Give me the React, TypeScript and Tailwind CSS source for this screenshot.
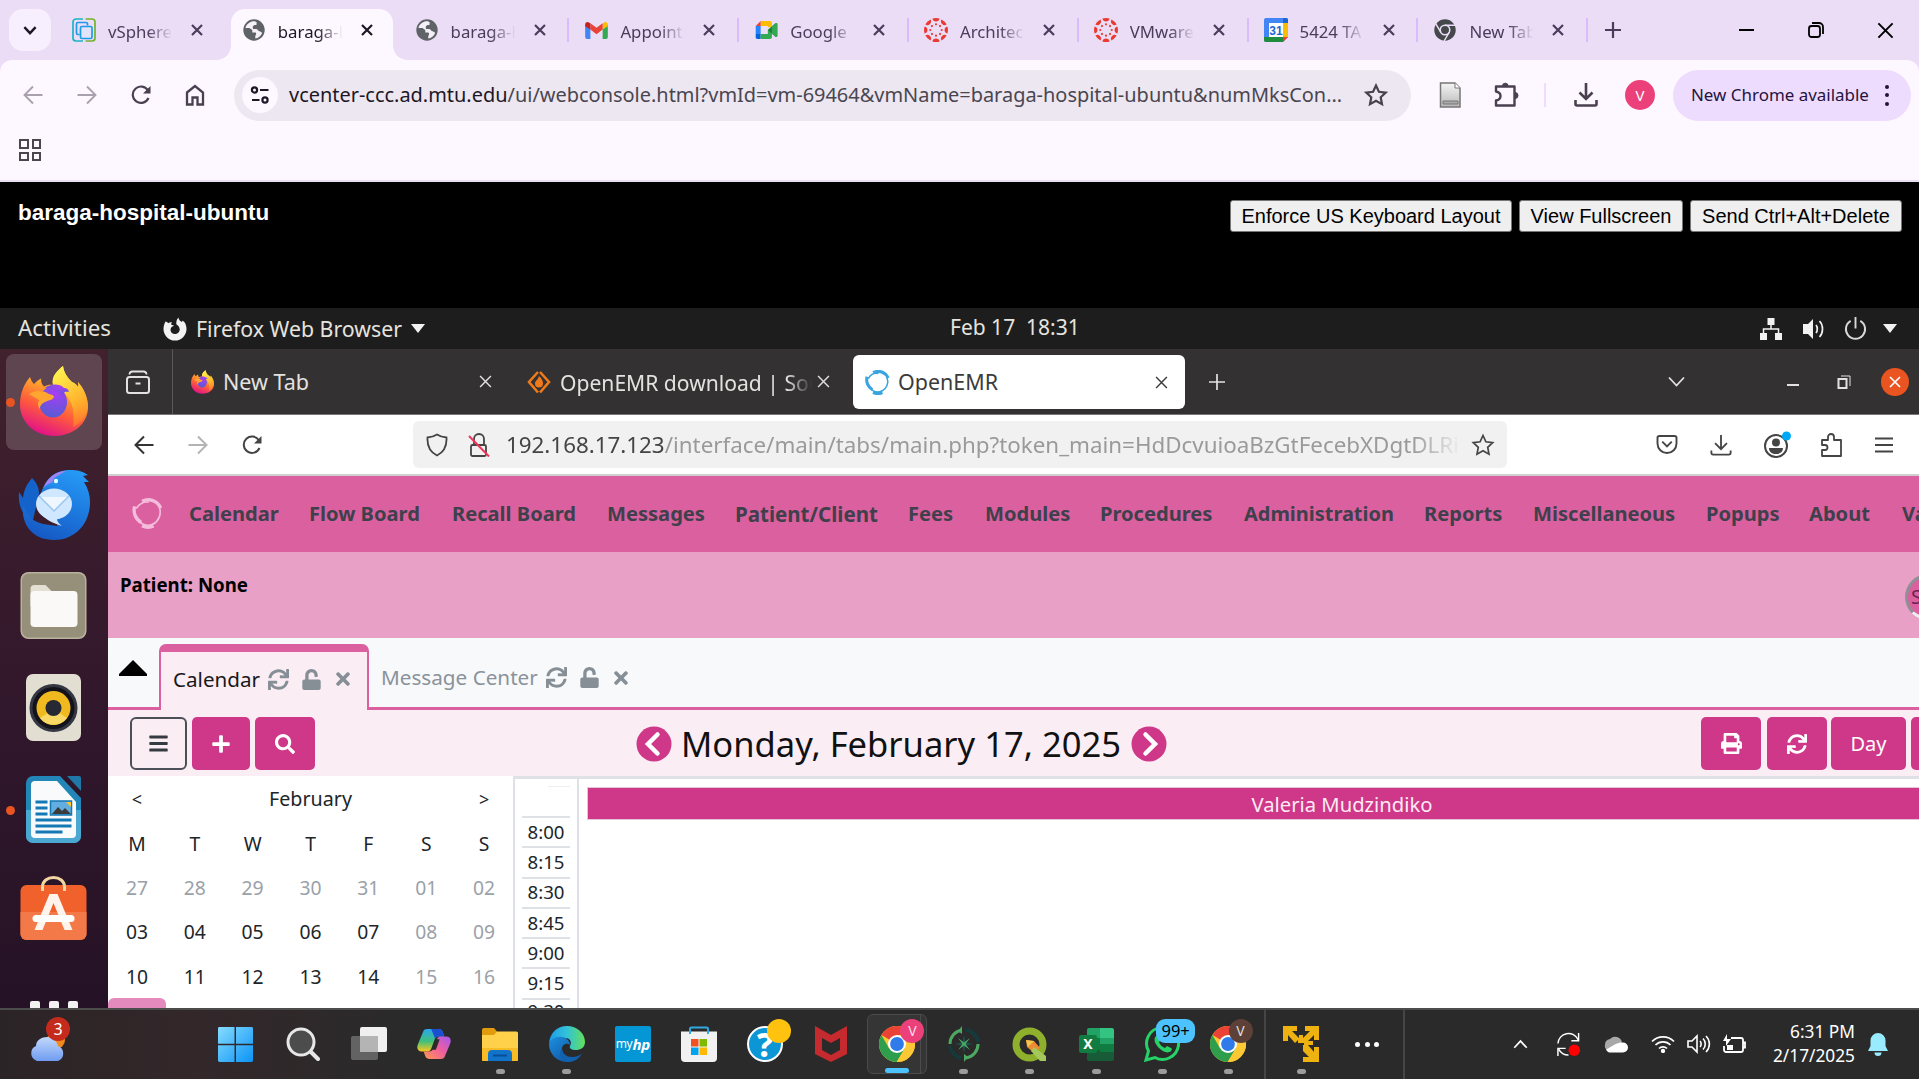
import React from "react";
import { FaSync, FaUnlock, FaTimes, FaBars, FaPlus, FaSearch, FaPrint } from "react-icons/fa";

type SvgProps = { className?: string };

/* ---------- favicons and browser icons ---------- */

const VSphere = () => (
  <svg viewBox="0 0 24 24" className="size-6" fill="none" strokeWidth="1.7">
    <path d="M11 1H4a3 3 0 0 0-3 3v16a3 3 0 0 0 3 3h7" stroke="#1cb5c4" />
    <path d="M13.500 1H20a3 3 0 0 1 3 3v16a3 3 0 0 1-3 3h-6.500" stroke="#76b12d" />
    <path d="M7.500 16.500H6A1.500 1.500 0 0 1 4.500 15V6A1.500 1.500 0 0 1 6 4.500h8A1.500 1.500 0 0 1 15.500 6v1.500" stroke="#1b9de8" />
    <rect x="8.500" y="8.500" width="11.500" height="12" rx="1.500" stroke="#1b9de8" fill="#e3e4fb" />
  </svg>
);

const Globe = () => (
  <svg viewBox="0 0 22 22" className="size-[22px]">
    <circle cx="11" cy="11" r="10.700" fill="#5f6368" />
    <path d="M9.500 2.200C6 3 3.200 5.500 2.400 9h4.100l2.800 2v2.600h2.600c1 0 1.400.8 1.200 1.600l-.8 1.700v2.600c3-.5 5.600-2.600 6.700-5.300l-.8-1.800-2.600-.5-1.600-2H10l-.3-2.300 1.700-1.500h2.300l.4-2.300-2.200-1.500z" fill="#fdf7ff" opacity=".95" />
    <path d="M14 2.800l-.6 2.600 1.800.9-1.500 1.800-2.500.6 1 1.400 3.200.2 1.700 2.200 2.500.4c.3-3.900-2-8.100-5.600-10.100z" fill="#5f6368" />
  </svg>
);

const Gmail = () => (
  <svg viewBox="0 0 24 18" className="h-[17px] w-[23px]">
    <path d="M0 3v13a2 2 0 0 0 2 2h3.500V7z" fill="#4285f4" />
    <path d="M18.500 18H22a2 2 0 0 0 2-2V3l-5.500 4z" fill="#34a853" />
    <path d="M18.500 2v6L24 4.500V2.600C24 .3 21.500-.8 19.700.7z" fill="#fbbc04" />
    <path d="M5.500 8V1.200L12 6l6.500-4.800V8L12 13z" fill="#ea4335" />
    <path d="M0 2.600v1.900L5.500 8V1.200L4.300.7C2.500-.8 0 .3 0 2.600z" fill="#c5221f" />
  </svg>
);

const Meet = () => (
  <svg viewBox="0 0 24 20" className="h-[18px] w-[23px]">
    <path d="M5.500 0H16a2 2 0 0 1 2 2v5h-4.500V5.500h-8z" fill="#fbbc04" />
    <path d="M0 5.500L5.500 0v5.500z" fill="#ea4335" />
    <path d="M0 5.500h5.500v9H0z" fill="#2684fc" />
    <path d="M0 14.500h5.500V20H2a2 2 0 0 1-2-2z" fill="#0066da" />
    <path d="M5.500 14.500h8V10L18 6.500V18a2 2 0 0 1-2 2H5.500z" fill="#34a853" />
    <path d="M13.500 10L22 2.600c.8-.6 2-.1 2 .9v13c0 1-1.200 1.500-2 .9z" fill="#188038" />
    <path d="M18 6v8l4 3.400c.8.6 2 .1 2-.9v-13c0-1-1.200-1.500-2-.9z" fill="#34a853" />
  </svg>
);

const Canvas = () => {
  const spokes = [0, 45, 90, 135, 180, 225, 270, 315];
  return (
    <svg viewBox="0 0 24 24" className="size-6" fill="#ea3a32">
      {spokes.map((a) => (
        <g key={a} transform={`rotate(${a} 12 12)`}>
          <path d="M8.400.6a12 12 0 0 1 7.200 0 3.700 3.700 0 0 1-7.200 0z" />
          <circle cx="12" cy="6.300" r="1.100" />
        </g>
      ))}
    </svg>
  );
};

const GCal = () => (
  <svg viewBox="0 0 24 24" className="size-6">
    <rect width="24" height="24" rx="2" fill="#4285f4" />
    <path d="M0 19h19v5H2a2 2 0 0 1-2-2z" fill="#1e8e3e" />
    <path d="M19 5h5v14h-5z" fill="#fbbc04" />
    <path d="M24 19v5h-5z" fill="#ebddf6" />
    <path d="M19 19h5l-5 5z" fill="#ea4335" />
    <path d="M19 0h3a2 2 0 0 1 2 2v3h-5z" fill="#1967d2" />
    <path d="M5 5h14v14H5z" fill="#fff" />
    <text x="12" y="16.500" textAnchor="middle" fontSize="12" fontWeight="700" fill="#1967d2" fontFamily="Liberation Sans">31</text>
  </svg>
);

const ChromeGray = () => (
  <svg viewBox="0 0 24 24" className="size-[22px]">
    <circle cx="12" cy="12" r="11.700" fill="#45484b" />
    <circle cx="12" cy="12" r="5.200" fill="#45484b" stroke="#ebddf6" strokeWidth="1.700" />
    <path d="M12 6.800h11M7.500 14.500L2 5.200M16.500 14.500L11 24" stroke="#ebddf6" strokeWidth="1.600" />
  </svg>
);

const Chrome = ({ className }: SvgProps) => (
  <svg viewBox="0 0 36 36" className={className}>
    <circle cx="18" cy="18" r="18" fill="#fcc934" />
    <path d="M18 18L2.400 9A18 18 0 0 1 33.600 9H18z" fill="#ea4335" />
    <path d="M2.400 9a18 18 0 0 0 15.300 27l8-13.500L18 18 10.200 22.500z" fill="#2e9e4c" />
    <path d="M18 9h15.600A18 18 0 0 1 17.700 36l8.100-13.500z" fill="#fcc934" />
    <circle cx="18" cy="18" r="9" fill="#fff" />
    <circle cx="18" cy="18" r="6.900" fill="#2f7bea" />
  </svg>
);

const X = ({ size = "size-[13px]", w = 2.200 }: { size?: string; w?: number }) => (
  <svg viewBox="0 0 12 12" className={size} fill="none" stroke="currentColor" strokeWidth={w}>
    <path d="M1 1l10 10M11 1L1 11" />
  </svg>
);

const Plus = ({ w = 2 }: { w?: number }) => (
  <svg viewBox="0 0 18 18" className="size-[18px]" fill="none" stroke="currentColor" strokeWidth={w}>
    <path d="M9 1v16M1 9h16" />
  </svg>
);

const Arrow = ({ flip, w = 2 }: { flip?: boolean; w?: number }) => (
  <svg viewBox="0 0 20 20" className={flip ? "size-5 -scale-x-100" : "size-5"} fill="none" stroke="currentColor" strokeWidth={w}>
    <path d="M19.500 10H2M10 1.500L1.500 10l8.500 8.500" />
  </svg>
);

const Reload = ({ w = 2.200 }: { w?: number }) => (
  <svg viewBox="0 0 20 20" className="size-5" fill="none" stroke="currentColor" strokeWidth={w}>
    <path d="M17.500 13A8.200 8.200 0 1 1 17 5.500L18 7" />
    <path d="M19.500 1v7.500H12z" fill="currentColor" stroke="none" />
  </svg>
);

const Star = ({ w = 2 }: { w?: number }) => (
  <svg viewBox="0 0 24 24" className="size-6" fill="none" stroke="currentColor" strokeWidth={w}>
    <path d="M12 2.500l2.900 6.300 6.800.8-5 4.700 1.300 6.900-6-3.400-6 3.400 1.300-6.900-5-4.700 6.800-.8z" />
  </svg>
);

const Download = ({ w = 2.600 }: { w?: number }) => (
  <svg viewBox="0 0 24 24" className="size-6" fill="none" stroke="currentColor" strokeWidth={w}>
    <path d="M12 0v15M5.500 9.500L12 16l6.500-6.500M1.500 17v4a1.500 1.500 0 0 0 1.500 1.500h18a1.500 1.500 0 0 0 1.500-1.500v-4" />
  </svg>
);

const FoxMono = () => (
  <svg viewBox="0 0 24 24" className="size-6" fill="#f2f2f2">
    <path fillRule="evenodd" d="M2.500 4.500c1 0 2 .8 2.600 1.800C6.500 5.200 8 5 9 5.200 8.300 6 8 7 8.500 8c1 0 2 .3 2.500 1-1.500.2-3.500 1.500-3.500 3.700 0 2.700 2 4.300 4.500 4.300s4.700-2 4.700-4.600c0-2.300-1.600-4-3.200-4.900 0 0-1-4 2-7 .2 2.200 1.500 3.500 3.500 4.500.5-1 .3-1.500.3-1.500C22.500 5 23.500 9 23.500 12A11.500 11.500 0 0 1 .5 12c0-3.500 1-5.500 2-7.500z" />
  </svg>
);

const Firefox = ({ className, id }: { className?: string; id: string }) => (
  <svg viewBox="0 0 68 70" className={className}>
    <defs>
      <linearGradient id={id + "b"} x1=".75" y1="0" x2=".35" y2="1">
        <stop offset="0" stopColor="#ffe93f" />
        <stop offset=".35" stopColor="#ffa62b" />
        <stop offset=".65" stopColor="#ff5b3c" />
        <stop offset="1" stopColor="#e0108a" />
      </linearGradient>
      <linearGradient id={id + "y"} x1=".4" y1="0" x2=".8" y2="1">
        <stop offset="0" stopColor="#fff04e" />
        <stop offset=".6" stopColor="#ffb22c" />
        <stop offset="1" stopColor="#ff8a24" stopOpacity=".4" />
      </linearGradient>
      <radialGradient id={id + "p"} cx=".6" cy=".2" r=".9">
        <stop offset="0" stopColor="#a83df5" />
        <stop offset="1" stopColor="#4f5fd0" />
      </radialGradient>
    </defs>
    <path d="M10 11c1 3 2 5 4 7 2-2 4-4 7-5.500 0 4 1 6 3 8 4-2 6-2 9-1.500C31 10 38 4 43 0c1 7 4 11 9 16 3 1 5 3 6 5 1-2 0-4 0-5 6 7 10 16 10 25 0 17-15 29-34 29S0 56 0 39C0 27 4 18 10 11z" fill={`url(#${id}b)`} />
    <path d="M43 0c1 7 4 11 9 16 3 1 5 3 6 5 1-2 0-4 0-5 6 7 10 16 10 25-2 11-8 17-15 20 2-14 0-26-9-34-5-3-8-6-11-8C31 10 38 4 43 0z" fill={`url(#${id}y)`} />
    <ellipse cx="33" cy="36" rx="14" ry="15.500" fill={`url(#${id}p)`} />
    <path d="M25 22c5-4 14-5 19 0 3 0 4 1 5 4-5-1-6 1-5 4-5-5-12-8-19-8z" fill={`url(#${id}p)`} />
    <path d="M9 28c6-4 15-4 20 0 3 1 5 1 5 3-2 4-6 3-9 5-4 2-5 4-5 7-3-4-2-7-1-9-3-2-7-4-10-6z" fill="#ffa630" />
  </svg>
);

const OpenEmr = ({ className, color, width = 3 }: { className: string; color: string; width?: number }) => (
  <svg viewBox="0 0 26 26" className={className} fill="none" stroke={color} strokeWidth={width}>
    <path d="M8.500 2.800A11 11 0 0 1 24 8.500" />
    <path d="M23 8a11.500 11.500 0 0 1-5.500 14" strokeWidth={width / 2} />
    <path d="M8.500 23a11 11 0 0 0 9.500.3" strokeWidth={width * 1.200} />
    <path d="M2.200 7a12 12 0 0 0 5.500 13.500" />
    <path d="M3.500 9A10 10 0 0 1 14 3.500M7 20.500a9 9 0 0 0 11 1" strokeWidth={width / 2} />
  </svg>
);

const Vee = ({ className, w = 2 }: { className: string; w?: number }) => (
  <svg viewBox="0 0 18 12" className={className} fill="none" stroke="currentColor" strokeWidth={w}>
    <path d="M1.500 1.500L9 9.500l7.500-8" />
  </svg>
);

/* ---------- Chrome window ---------- */

const tabs = [
  { icon: <VSphere />, text: "vSphere -", active: false },
  { icon: <Globe />, text: "baraga-h", active: true },
  { icon: <Globe />, text: "baraga-h", active: false },
  { icon: <Gmail />, text: "Appointm", active: false },
  { icon: <Meet />, text: "Google", active: false },
  { icon: <Canvas />, text: "Architect", active: false },
  { icon: <Canvas />, text: "VMware", active: false },
  { icon: <GCal />, text: "5424 TA", active: false },
  { icon: <ChromeGray />, text: "New Tab", active: false },
];

function ChromeTabs() {
  return (
    <div className="flex h-[60px] items-center bg-[#ebddf6] text-[#4a3d5c]">
      <div className="ml-[9px] flex size-[42px] shrink-0 items-center justify-center rounded-[14px] bg-[#f8effe] text-[#1d1726]">
        <Vee className="h-[9px] w-[14px]" w={3.200} />
      </div>
      <div className="ml-[6px] flex h-full">
        {tabs.map((t, i) => (
          <div key={i} className={"relative flex h-full w-[169.800px] shrink-0 items-center " + (i === 2 ? "ml-[3px]" : "")}>
            {t.active && (
              <>
                <div className="absolute inset-x-[4px] top-[9px] bottom-0 rounded-t-[14px] bg-[#fdf7ff]" />
                <div className="absolute bottom-0 -left-[10px] size-[14px] bg-[radial-gradient(circle_at_0_0,transparent_13.500px,#fdf7ff_14px)]" />
                <div className="absolute -right-[10px] bottom-0 size-[14px] bg-[radial-gradient(circle_at_100%_0,transparent_13.500px,#fdf7ff_14px)]" />
              </>
            )}
            <div className="relative ml-[15px] flex w-6 justify-center">{t.icon}</div>
            <div
              className={
                "relative mt-px ml-[12px] h-[24px] w-[66px] overflow-hidden text-[16.800px] leading-[26px] whitespace-nowrap [mask-image:linear-gradient(to_right,#000_60%,transparent_98%)] " +
                (t.active ? "text-[#1d1726]" : "")
              }
            >
              {t.text}
            </div>
            <div className={"relative ml-[17px] flex " + (t.active ? "text-[#1d1726]" : "")}>
              <X size="size-[12px]" />
            </div>
            {i > 1 && <div className="absolute top-[18px] right-0 h-6 w-[2px] bg-[#d9bcfb]" />}
          </div>
        ))}
      </div>
      <div className="ml-[16px]">
        <Plus w={2.200} />
      </div>
      <div className="ml-auto flex items-center text-black">
        <div className="mr-[54px] h-[2px] w-[15px] bg-black" />
        <svg viewBox="0 0 16 16" className="mr-[53px] size-4" fill="none" stroke="currentColor" strokeWidth="1.800">
          <rect x="1" y="4" width="11" height="11" rx="2.500" />
          <path d="M4 1h7a4 4 0 0 1 4 4v7" />
        </svg>
        <div className="mr-[25px]">
          <X size="size-[17px]" w={1.400} />
        </div>
      </div>
    </div>
  );
}

function ChromeToolbar() {
  return (
    <div className="bg-[#ebddf6]">
      <div className="flex h-[122px] flex-col rounded-t-[12px] border-b-2 border-[#e9dff0] bg-[#fdf7ff] text-[#4a4050]">
        <div className="mt-px flex h-[68px] items-center">
          <div className="ml-[23px] text-[#a9a2ae]"><Arrow w={1.900} /></div>
          <div className="ml-[34px] text-[#a9a2ae]"><Arrow flip w={1.900} /></div>
          <div className="ml-[34px]"><Reload /></div>
          <svg viewBox="0 0 20 22" className="ml-[34px] h-[22px] w-5" fill="none" stroke="currentColor" strokeWidth="2.300">
            <path d="M2 8.500L10 2l8 6.500V20.500h-5.500v-7h-5v7H2z" />
          </svg>
          <div className="ml-[29px] flex h-[51px] w-[1177px] items-center rounded-full bg-[#ede7f1]">
            <div className="ml-[8px] flex size-9 items-center justify-center rounded-full bg-[#fdf7ff] text-[#1d1726]">
              <svg viewBox="0 0 20 18" className="h-[18px] w-5" fill="none" stroke="currentColor" strokeWidth="2.200">
                <circle cx="4.500" cy="4" r="2.600" />
                <path d="M10 4h8.500M2 14h7.500" />
                <circle cx="15" cy="14" r="2.600" />
              </svg>
            </div>
            <div className="ml-[11px] text-[19.950px] whitespace-nowrap text-[#4a4650]">
              <span className="text-[#1d1726]">vcenter-ccc.ad.mtu.edu</span>
              /ui/webconsole.html?vmId=vm-69464&amp;vmName=baraga-hospital-ubuntu&amp;numMksCon...
            </div>
            <div className="mr-[23px] ml-auto text-[#47424c]"><Star w={2.200} /></div>
          </div>
          <svg viewBox="0 0 22 26" className="ml-[28px] h-[26px] w-[22px]">
            <defs>
              <linearGradient id="doc" x1="0" y1="0" x2="0" y2="1">
                <stop offset="0" stopColor="#f4f4f4" />
                <stop offset="1" stopColor="#b9b9b9" />
              </linearGradient>
            </defs>
            <path d="M1.500 1h14.500l5 5v19h-19.500z" fill="url(#doc)" stroke="#777" strokeWidth="1.500" />
            <path d="M4 19h15v3H4z" fill="#aaa" stroke="#777" />
            <path d="M16 1v5h5" fill="#fff" stroke="#777" />
          </svg>
          <svg viewBox="0 0 26 26" className="ml-[32px] size-[26px]" fill="none" stroke="currentColor" strokeWidth="2.400">
            <path d="M3 4.500h18.500v19H3v-5c3.500-.5 4.500-2 4.500-4.500S6 10 3 9.500z" strokeLinejoin="round" />
            <path d="M9.500 4a2.800 2.800 0 0 1 5.600 0zM22 10.500a3 3 0 0 1 0 6z" fill="currentColor" strokeWidth="1" />
          </svg>
          <div className="ml-[25px] h-6 w-[2px] bg-[#ecdcfd]" />
          <div className="ml-[28px]"><Download /></div>
          <div className="ml-[27px] flex size-[30px] items-center justify-center rounded-full bg-[#ec407a] text-[15px] text-white">V</div>
          <div className="ml-[18px] flex h-[51px] w-[238px] items-center rounded-full bg-[#eedcfe] text-[#25123f]">
            <span className="ml-[18px] text-[16.950px] whitespace-nowrap">New Chrome available</span>
            <span className="ml-[16px] flex flex-col gap-[4.500px]">
              <i className="size-[4px] rounded-full bg-[#25123f]" />
              <i className="size-[4px] rounded-full bg-[#25123f]" />
              <i className="size-[4px] rounded-full bg-[#25123f]" />
            </span>
          </div>
        </div>
        <div className="mt-[10px] ml-[19px] grid h-[22px] w-[22px] grid-cols-2 gap-[3px]">
          <i className="border-2 border-[#4a4650]" />
          <i className="border-2 border-[#4a4650]" />
          <i className="border-2 border-[#4a4650]" />
          <i className="border-2 border-[#4a4650]" />
        </div>
      </div>
    </div>
  );
}

function ConsoleHeader() {
  const btn = "flex h-[32px] items-center justify-center rounded-[3px] border border-[#767676] bg-[#efefef] text-[20px] whitespace-nowrap text-black";
  return (
    <div className="flex h-[126px] items-start bg-black font-['Liberation_Sans',sans-serif]">
      <h1 className="mt-[15px] ml-[18px] text-[22.500px] leading-[32px] font-bold whitespace-nowrap text-white">baraga-hospital-ubuntu</h1>
      <div className="mt-[18px] mr-[17px] ml-auto flex gap-[7px]">
        <button className={btn + " w-[282px]"}>Enforce US Keyboard Layout</button>
        <button className={btn + " w-[164px]"}>View Fullscreen</button>
        <button className={btn + " w-[212px]"}>Send Ctrl+Alt+Delete</button>
      </div>
    </div>
  );
}

/* ---------- Ubuntu desktop ---------- */

const TriDown = ({ className }: SvgProps) => (
  <svg viewBox="0 0 14 9" className={className} fill="#f2f2f2"><path d="M0 0h14L7 9z" /></svg>
);

function UbuntuBar() {
  return (
    <div className="grid h-[41px] shrink-0 grid-cols-[950px_1fr_160px] items-center bg-[#1d1d1d] text-[#e6e3df]">
      <div className="flex items-center">
        <span className="ml-[18px] w-[145px] text-[22.320px] leading-none">Activities</span>
        <FoxMono />
        <span className="ml-[9px] w-[206px] text-[21.300px] leading-none whitespace-nowrap">Firefox Web Browser</span>
        <TriDown className="ml-[9px] h-[9px] w-[14px]" />
      </div>
      <span className="-mt-[2px] text-[21px] leading-none whitespace-pre">Feb 17  18:31</span>
      <div className="flex items-center">
        <svg viewBox="0 0 24 24" className="size-6" fill="#f2f2f2">
          <path d="M8.500 1h7v7h-7zM1 16h7v7H1zM16 16h7v7h-7z" />
          <path d="M12 7v5M4.500 17v-5h15v5" fill="none" stroke="#f2f2f2" strokeWidth="1.500" />
        </svg>
        <svg viewBox="0 0 24 24" className="ml-[19px] size-6" fill="none" stroke="#f2f2f2" strokeWidth="1.700">
          <path d="M1 7h5l5-5v20l-5-5H1z" fill="#f2f2f2" stroke="none" />
          <path d="M14 8c1.700 2 1.700 6 0 8M17.500 4c4 4 4 12 0 16" />
        </svg>
        <svg viewBox="0 0 24 24" className="ml-[18px] size-[23px]" fill="none" stroke="#d8d8d8" strokeWidth="2">
          <path d="M7 4a10 10 0 1 0 10 0M12 0v12" />
        </svg>
        <TriDown className="ml-[16px] h-[9px] w-[14px]" />
      </div>
    </div>
  );
}

function Dock() {
  return (
    <div className="flex w-[108px] shrink-0 flex-col items-center overflow-hidden bg-linear-to-b from-[#41212c] via-[#33182c] to-[#251226] pr-px">
      <div className="relative mt-[5px] flex h-[96px] w-[96px] shrink-0 items-center justify-center rounded-[8px] bg-[#5f4550]">
        <Firefox className="-mt-[3px] h-[70px] w-[68px]" id="dock" />
        <i className="absolute top-[44px] left-0 size-[9px] rounded-full bg-[#e95420]" />
      </div>
      <svg viewBox="0 0 72 70" className="mt-[20px] h-[70px] w-[72px] shrink-0">
        <defs>
          <linearGradient id="tb" x1=".7" y1="0" x2=".3" y2="1">
            <stop offset="0" stopColor="#2598f5" />
            <stop offset="1" stopColor="#1558c4" />
          </linearGradient>
        </defs>
        <path d="M14 8c6 6 7 11 7 16l-6 26C3 45 0 34 1 22c2 3 3 4 4 6 1-9 4-14 9-20z" fill="#1463cb" />
        <path d="M24 22C28 6 40 0 52 0c8 0 12 1 18 5l-5 1 6 6h-5c4 6 6 13 6 20 0 22-15 38-36 38S3 55 5 36c6 10 8 15 20 18l14 2V34z" fill="url(#tb)" />
        <path d="M24 22C28 8 38 1 48 1l-12 7-4 10-7 3z" fill="#a184f4" />
        <path d="M24 20c4-6 10-8 14-8l10 10-12 12-16-4z" fill="url(#tb)" />
        <ellipse cx="36" cy="34" rx="18" ry="15.500" fill="#cfe7ff" />
        <path d="M22 43c5 6 12 10 22 13-5-4-6-7-4-9z" fill="#cfe7ff" />
        <path d="M22 27l14 14 14-14z" fill="#eef7ff" />
        <path d="M21 26l15 15 15-15" fill="none" stroke="#9cc6ee" strokeWidth="1.500" />
        <circle cx="38" cy="11" r="2.200" fill="#dff" />
      </svg>
      <svg viewBox="0 0 66 67" className="mt-[32px] h-[67px] w-[67px] shrink-0">
        <rect width="66" height="67" rx="8" fill="#b9b29d" />
        <rect x="1.500" y="1.500" width="63" height="64" rx="7" fill="#968f79" />
        <path d="M10 17a4 4 0 0 1 4-4h11l6 6h22v15H10z" fill="#e3dfd3" />
        <rect x="10" y="19" width="47" height="36" rx="4" fill="#faf9f7" />
      </svg>
      <svg viewBox="0 0 55 67" className="mt-[35px] h-[67px] w-[55px] shrink-0">
        <rect width="55" height="67" rx="7" fill="#e3ded2" />
        <circle cx="27.500" cy="34" r="24" fill="#343641" />
        <circle cx="27.500" cy="34" r="21" fill="#12131b" />
        <circle cx="27.500" cy="34" r="17" fill="#efb91f" />
        <path d="M14 44a17 17 0 0 0 27 0l-9-6h-9z" fill="#f9d866" />
        <circle cx="27.500" cy="34" r="8" fill="#262833" />
      </svg>
      <div className="relative mt-[35px] flex w-[96px] shrink-0 justify-center">
        <i className="absolute top-[30px] left-0 size-[9px] rounded-full bg-[#e95420]" />
        <svg viewBox="0 0 55 67" className="h-[67px] w-[55px]">
          <path d="M7 0h27l21 22v38a7 7 0 0 1-7 7H7a7 7 0 0 1-7-7V7a7 7 0 0 1 7-7z" fill="#2386b8" />
          <path d="M0 34h55v26a7 7 0 0 1-7 7H7a7 7 0 0 1-7-7z" fill="#4ba8d1" />
          <path d="M41 0h12a2 2 0 0 1 2 2v13z" fill="#1f78a8" />
          <path d="M9 5h22l19 21v32a4 4 0 0 1-4 4H9a4 4 0 0 1-4-4V9a4 4 0 0 1 4-4z" fill="#f8fafb" />
          <path d="M9.500 26h12M9.500 32h12M9.500 38h12M9.500 44h36M9.500 50h36M9.500 56h27" stroke="#1378b4" strokeWidth="3" />
          <rect x="24.500" y="25" width="21" height="14" fill="#62aee0" stroke="#1378b4" strokeWidth="1.500" />
          <path d="M26 38l6-7 4 4 3-3 6 6z" fill="#3b3b3b" />
          <path d="M40 26h5v5z" fill="#ffc628" />
        </svg>
      </div>
      <svg viewBox="0 0 66 64" className="mt-[33px] h-[64px] w-[67px] shrink-0">
        <rect y="9" width="66" height="55" rx="6" fill="#f0612b" />
        <path d="M0 36h66v22a6 6 0 0 1-6 6H6a6 6 0 0 1-6-6z" fill="#f37a48" />
        <path d="M22 15V11C22 5 27 1.500 33 1.500S44 5 44 11v4" fill="none" stroke="#f3d6a0" strokeWidth="3" />
        <path d="M29 18h8l15 36h-8L33 27 22 54h-8z" fill="#fff3ec" />
        <rect x="12" y="39" width="42" height="7" rx="3.500" fill="#fff" />
      </svg>
      <div className="mt-[61px] flex shrink-0 gap-[9px]">
        <i className="size-[10px] rounded-[2px] bg-[#f2f2f2]" />
        <i className="size-[10px] rounded-[2px] bg-[#f2f2f2]" />
        <i className="size-[10px] rounded-[2px] bg-[#f2f2f2]" />
      </div>
    </div>
  );
}

function FirefoxTabs() {
  return (
    <div className="flex h-[66px] shrink-0 items-center border-b border-[#777] bg-[#333132] text-[#e4e2e0]">
      <div className="flex h-full w-[65px] items-center justify-center border-r border-[#5a5859] pr-[4px]">
        <svg viewBox="0 0 24 24" className="size-6" fill="none" stroke="currentColor" strokeWidth="2">
          <rect x="1" y="7" width="22" height="16" rx="2.500" />
          <path d="M3.500 4.500a3 3 0 0 1 2.500-3h12a3 3 0 0 1 2.500 3M9.500 13.500h5" strokeWidth="1.800" />
        </svg>
      </div>
      <Firefox className="ml-[18px] h-6 w-[23px]" id="tab" />
      <span className="mt-px ml-[9px] w-[256px] text-[21.500px] leading-none">New Tab</span>
      <X w={1.300} />
      <svg viewBox="0 0 24 24" className="ml-[35px] size-6">
        <path d="M11 2L2 12l9 10.500M13 22.500l9-10.500L13 2" fill="none" stroke="#ee7a1c" strokeWidth="2.600" />
        <path d="M12 6c3 3 4 5 4 7.500a4 4 0 0 1-8 0c0-2.500 3-3.500 4-7.500z" fill="#ee7a1c" />
      </svg>
      <span className="mt-[2px] ml-[9px] w-[252px] overflow-hidden text-[21.100px] leading-[30px] whitespace-nowrap [mask-image:linear-gradient(to_right,#000_90%,transparent)]">
        OpenEMR download | Sour
      </span>
      <span className="ml-[5px] flex"><X w={1.300} /></span>
      <div className="mt-px ml-[23px] flex h-[54px] w-[332px] items-center rounded-[6px] bg-white text-[#3b3b3b]">
        <OpenEmr className="ml-[12px] size-[25px]" color="#38a5e0" width={3.200} />
        <span className="ml-[8px] w-[257px] text-[21.450px] leading-none">OpenEMR</span>
        <X w={1.300} />
      </div>
      <span className="mt-px ml-[23px]"><Plus w={1.700} /></span>
      <div className="mr-[10px] ml-auto flex items-center">
        <Vee className="h-[12px] w-[19px]" w={1.800} />
        <div className="mt-[6px] ml-[101px] h-[2px] w-[12px] bg-[#e4e2e0]" />
        <svg viewBox="0 0 14 14" className="ml-[38px] size-[14px]" fill="none" stroke="currentColor">
          <rect x="1.500" y="4" width="8" height="9" strokeWidth="2" />
          <path d="M4 1h9v10" strokeWidth="1" />
        </svg>
        <div className="ml-[30px] flex size-[28px] items-center justify-center rounded-full bg-[#e95420] text-white"><X w={1.700} size="size-[12px]" /></div>
      </div>
    </div>
  );
}

function FirefoxNav() {
  return (
    <div className="flex h-[61px] shrink-0 items-center border-b-2 border-[#cfcfcf] bg-white text-[#444]">
      <div className="ml-[26px] text-[#333]"><Arrow /></div>
      <div className="ml-[34px] text-[#b4b4b4]"><Arrow flip /></div>
      <div className="ml-[34px]"><Reload w={2} /></div>
      <div className="ml-[151px] flex h-[47px] w-[1094px] items-center rounded-[6px] bg-[#f1f1f1]">
        <svg viewBox="0 0 22 24" className="ml-[13px] h-6 w-[22px]" fill="none" stroke="currentColor" strokeWidth="1.800">
          <path d="M11 1.500c3 2 6 2.800 9.500 3C21 13 18 19 11 22.500 4 19 1 13 1.500 4.500 5 4.300 8 3.500 11 1.500z" />
        </svg>
        <svg viewBox="0 0 22 24" className="ml-[20px] h-6 w-[22px]" fill="none" stroke="currentColor" strokeWidth="1.800">
          <rect x="3" y="12" width="15" height="11" rx="1.500" />
          <path d="M6 11V6a5 5 0 0 1 10 0v5" />
          <path d="M1 3l20 20.500" stroke="#f0355a" strokeWidth="2" />
        </svg>
        <div className="mt-px ml-[16px] w-[955px] overflow-hidden text-[22.360px] leading-[32px] whitespace-nowrap text-[#9a9a9a] [mask-image:linear-gradient(to_right,#000_95%,transparent)]">
          <span className="text-[#444]">192.168.17.123</span>/interface/main/tabs/main.php?token_main=HdDcvuioaBzGtFecebXDgtDLRi
        </div>
        <div className="ml-[10px]"><Star w={1.700} /></div>
      </div>
      <div className="ml-auto flex items-center">
        <svg viewBox="0 0 22 20" className="h-[19px] w-[22px]" fill="none" stroke="currentColor" strokeWidth="2">
          <path d="M3 1h16a2 2 0 0 1 2 2v6a10 10 0 0 1-20 0V3a2 2 0 0 1 2-2z" />
          <path d="M6 7l5 5 5-5" />
        </svg>
        <svg viewBox="0 0 24 24" className="ml-[32px] size-[22px]" fill="none" stroke="currentColor" strokeWidth="2">
          <path d="M12 1v15M5.500 10L12 16.500 18.500 10M1.500 18v2.500a2 2 0 0 0 2 2h17a2 2 0 0 0 2-2V18" />
        </svg>
        <svg viewBox="0 0 28 28" className="ml-[31px] size-[28px]">
          <circle cx="13" cy="15" r="11" fill="none" stroke="#444" strokeWidth="2" />
          <circle cx="13" cy="11.500" r="4" fill="#444" />
          <path d="M6 17h14c0 4-3 6-7 6s-7-2-7-6z" fill="#444" />
          <circle cx="23.500" cy="5" r="4.500" fill="#00a9f7" />
        </svg>
        <svg viewBox="0 0 22 24" className="ml-[29px] h-6 w-[22px]" fill="none" stroke="currentColor" strokeWidth="1.800">
          <path d="M2 23v-6h3a2.500 2.500 0 0 0 0-5H2V7h6V4a3 3 0 0 1 6 0v3h7v16z" strokeLinejoin="round" />
        </svg>
        <svg viewBox="0 0 18 16" className="mr-[26px] ml-[33px] h-4 w-[18px]" stroke="currentColor" strokeWidth="2">
          <path d="M0 1.500h18M0 8h18M0 14.500h18" />
        </svg>
      </div>
    </div>
  );
}

/* ---------- OpenEMR ---------- */

function OpenEmrMenu() {
  const item = "shrink-0 whitespace-nowrap";
  return (
    <div className="flex h-[76px] shrink-0 items-center overflow-hidden bg-[#da609f] pt-px text-[20.100px] leading-none font-bold text-[#3f404b]">
      <OpenEmr className="-mt-[2px] ml-[24px] size-[31px] shrink-0" color="#f5bddb" width={2.800} />
      <div className="ml-[26px] flex">
        <span className={item + " w-[120px]"}>Calendar</span>
        <span className={item + " w-[143px]"}>Flow Board</span>
        <span className={item + " w-[155px]"}>Recall Board</span>
        <span className={item + " w-[128px]"}>Messages</span>
        <span className={item + " w-[173px] text-[20.500px]"}>Patient/Client</span>
        <span className={item + " w-[77px]"}>Fees</span>
        <span className={item + " w-[115px]"}>Modules</span>
        <span className={item + " w-[144px]"}>Procedures</span>
        <span className={item + " w-[180px] text-[19.950px]"}>Administration</span>
        <span className={item + " w-[109px]"}>Reports</span>
        <span className={item + " w-[173px]"}>Miscellaneous</span>
        <span className={item + " w-[103px]"}>Popups</span>
        <span className={item + " w-[93px]"}>About</span>
        <span className={item}>Valeria</span>
      </div>
    </div>
  );
}

function PatientBar() {
  return (
    <div className="flex h-[86px] shrink-0 items-start justify-between overflow-hidden bg-[#e8a0c6]">
      <span className="mt-[20px] ml-[12px] text-[18.660px] leading-[26px] font-bold text-black">Patient: None</span>
      <div className="mt-[22px] -mr-[166px] h-[46px] w-[180px] shrink-0 rounded-full border-3 border-t-[#8f8f95] border-r-[#8f8f95] border-b-[#eee] border-l-[#8f8f95] bg-[#da609f] pl-[3px] text-[20px] leading-[40px] text-[#6a2450]">
        Search
      </div>
    </div>
  );
}

const TabTools = () => (
  <span className="flex items-center text-[#868e96]">
    <FaSync className="size-[21px]" />
    <FaUnlock className="ml-[12px] size-[21px]" />
    <FaTimes className="ml-[11px] size-[20px]" />
  </span>
);

function FrameTabs() {
  return (
    <div className="flex h-[72px] shrink-0 items-stretch bg-[#f8f9fb]">
      <div className="w-[51px] border-b-3 border-[#da609f] pt-[22px] pl-[11px]">
        <svg viewBox="0 0 28 16" className="h-4 w-7"><path d="M14 0L28 14v2H0v-2z" /></svg>
      </div>
      <div className="mt-[6px] flex w-[210px] items-center gap-[8px] rounded-t-[7px] border-x-2 border-t-8 border-[#da609f] bg-[#fbedf4] pb-[4px] pl-[12px] text-[20.600px] leading-none text-[#17181b]">
        <span>Calendar</span>
        <TabTools />
      </div>
      <div className="flex flex-1 items-center gap-[8px] border-b-3 border-[#da609f] pt-[10px] pl-[12px] text-[20.700px] leading-none text-[#8a929a]">
        <span>Message Center</span>
        <TabTools />
      </div>
    </div>
  );
}

const Circle = ({ flip }: { flip?: boolean }) => (
  <svg viewBox="0 0 36 36" className={flip ? "size-[36px] -scale-x-100" : "size-[36px]"}>
    <circle cx="18" cy="18" r="17.500" fill="#cf3789" />
    <path d="M21.500 8.500L12 18l9.500 9.500" fill="none" stroke="#fff" strokeWidth="4.500" strokeLinecap="round" />
  </svg>
);

function CalendarToolbar() {
  const b = "flex h-[53px] shrink-0 items-center justify-center rounded-[5px] bg-[#cf3789] text-white";
  return (
    <div className="flex h-[66px] shrink-0 items-center overflow-hidden bg-[#fbedf4] pt-px">
      <div className="ml-[22px] flex h-[53px] w-[57px] shrink-0 items-center justify-center rounded-[6px] border-2 border-[#4b5058] text-[#343a40]">
        <FaBars className="size-[21px]" />
      </div>
      <div className={b + " ml-[5px] w-[58px]"}><FaPlus className="size-[20px]" /></div>
      <div className={b + " ml-[5px] w-[60px]"}><FaSearch className="size-[20px]" /></div>
      <div className="ml-[321px] flex shrink-0 items-center">
        <Circle />
        <span className="mt-px ml-[9px] w-[440px] text-[34.550px] leading-none whitespace-nowrap text-[#111]">Monday, February 17, 2025</span>
        <span className="ml-[10px]"><Circle flip /></span>
      </div>
      <div className={b + " ml-[534px] w-[60px]"}><FaPrint className="size-[21px]" /></div>
      <div className={b + " ml-[6px] w-[60px]"}><FaSync className="size-[20px]" /></div>
      <div className={b + " ml-[4px] w-[75px] pt-px text-[20px]"}>Day</div>
      <div className={b + " ml-[5px] w-[90px]"}>Week</div>
    </div>
  );
}

const weeks = [
  ["27", "28", "29", "30", "31", "01", "02"],
  ["03", "04", "05", "06", "07", "08", "09"],
  ["10", "11", "12", "13", "14", "15", "16"],
];
const times = ["8:00", "8:15", "8:30", "8:45", "9:00", "9:15", "9:30"];

function CalendarBody() {
  return (
    <div className="flex min-h-0 flex-1 overflow-hidden bg-white">
      <div className="w-[405px] shrink-0 text-center text-[19.300px] text-[#212529]">
        <div className="grid h-[46px] grid-cols-7 items-center">
          <span className="text-[18px]">&lt;</span>
          <span className="col-span-5 text-[19.700px]">February</span>
          <span className="text-[18px]">&gt;</span>
        </div>
        <div className="grid h-[44px] grid-cols-7 items-center">
          {["M", "T", "W", "T", "F", "S", "S"].map((d, i) => <span key={i}>{d}</span>)}
        </div>
        {weeks.map((w, r) => (
          <div key={r} className="grid h-[44.400px] grid-cols-7 items-center">
            {w.map((d, c) => (
              <span key={d} className={r === 0 || c > 4 ? "text-[#9aa1a8]" : ""}>{d}</span>
            ))}
          </div>
        ))}
        <div className="mt-[-1px] h-[40px] w-[58px] rounded-t-[6px] bg-[#e48abd]" />
      </div>
      <div className="w-[66px] shrink-0 border-x-2 border-t-3 border-[#dee2e6] px-[7px]">
        <div className="flex h-[39px] justify-end border-b-2 border-[#dee2e6]">
          <i className="mt-[7px] h-px w-[22px] bg-[#eceef0]" />
        </div>
        {times.map((t, i) => (
          <div
            key={t}
            className={
              "flex items-center justify-center border-b-2 border-[#dee2e6] text-[18.650px] leading-none text-[#212529] " +
              (i === 6 ? "h-[26px]" : "h-[30.300px]")
            }
          >
            {t}
          </div>
        ))}
      </div>
      <div className="flex-1 overflow-hidden border-t-3 border-[#dee2e6] pt-[8px] pl-[8px]">
        <div className="flex h-[33px] w-[1510px] items-center justify-center border border-[#e2c8d6] bg-[#cf3789] pt-px text-[20.220px] leading-none text-[#fdeaf4]">
          Valeria Mudzindiko
        </div>
      </div>
    </div>
  );
}

/* ---------- Windows taskbar ---------- */

const Slot = ({ children, dot }: { children: React.ReactNode; dot?: boolean }) => (
  <div className="relative flex h-full w-[66.200px] shrink-0 items-center justify-center">
    {children}
    {dot && <i className="absolute bottom-[4px] h-[5px] w-[9px] rounded-full bg-[#9c9c9c]" />}
  </div>
);

const Copilot = () => (
  <svg viewBox="0 0 36 34" className="h-[32px] w-[34px]">
    <defs>
      <linearGradient id="cp1" x1="0" y1="0" x2="0" y2="1">
        <stop offset="0" stopColor="#2aa7f0" />
        <stop offset=".55" stopColor="#3fc07a" />
        <stop offset="1" stopColor="#ffc71f" />
      </linearGradient>
      <linearGradient id="cp2" x1="1" y1="0" x2="0" y2="1">
        <stop offset="0" stopColor="#a457f0" />
        <stop offset=".5" stopColor="#f0609a" />
        <stop offset="1" stopColor="#ff9a4d" />
      </linearGradient>
    </defs>
    <path d="M11 1h12c3 0 4 2 5 5l1 3h-6c-3 0-4 2-5 5l-3 8c-1 2-2 3-4 3H5c-4 0-6-3-4-8l5-12c1-3 2-4 5-4z" fill="url(#cp1)" />
    <path d="M15 1h8c3 0 4 2 5 5l1 3h-6c-2 0-3 1-4 2z" fill="#1b4fd0" />
    <path d="M25 33H13c-3 0-4-2-5-5l-1-3h6c3 0 4-2 5-5l3-8c1-2 2-3 4-3h6c4 0 6 3 4 8l-5 12c-1 3-2 4-5 4z" fill="url(#cp2)" />
    <path d="M20 12h4l-4 11h-4z" fill="#2a2a2b" />
  </svg>
);

const Edge = () => (
  <svg viewBox="0 0 36 36" className="size-9">
    <defs>
      <linearGradient id="ed1" x1="0" y1=".5" x2="1" y2=".5">
        <stop offset="0" stopColor="#1e9bea" />
        <stop offset=".5" stopColor="#32c3d8" />
        <stop offset="1" stopColor="#62e05a" />
      </linearGradient>
      <linearGradient id="ed2" x1="0" y1="0" x2="1" y2="1">
        <stop offset="0" stopColor="#1d8fe0" />
        <stop offset="1" stopColor="#0c4a94" />
      </linearGradient>
    </defs>
    <path d="M0 17C1 7 8 0 18 0s18 7 18 16c0 6-5 8-9 8-5 0-7-2-6-4 2-3 1-8-5-8C8 11 2 14 0 17z" fill="url(#ed1)" />
    <path d="M0 18c1-5 7-8 13-7 5 1 8 4 8 8-4-3-8 0-8 4 0 5 5 9 11 9 4 0 7-2 9-4-3 5-8 8-15 8C8 36 0 28 0 18z" fill="url(#ed2)" />
    <path d="M13 22c0 6 5 9 10 9 4 0 7-1 10-4-3 5-8 9-14 9C11 34 9 28 13 22z" fill="#1261ae" />
  </svg>
);

function Taskbar() {
  return (
    <div className="flex h-[71px] shrink-0 items-stretch border-t-2 border-[#4c4c4c] bg-[linear-gradient(to_right,#2b2426,#33272a_10%,#2b2a2a_20%,#2a2a2b)] pb-px text-white">
      <div className="relative flex w-[202.500px] shrink-0 items-center">
        <svg viewBox="0 0 38 36" className="ml-[29px] h-9 w-[38px]">
          <defs>
            <linearGradient id="cl" x1="0" y1="0" x2="0" y2="1">
              <stop offset="0" stopColor="#c3d8fb" />
              <stop offset="1" stopColor="#6f9cf0" />
            </linearGradient>
          </defs>
          <circle cx="27" cy="14" r="9" fill="#f08a1c" />
          <path d="M8 35a8 8 0 0 1-1-15C7 14 13 11 18 11s10 4 11 9a8 8 0 0 1 0 15z" fill="url(#cl)" />
        </svg>
        <span className="absolute top-[7px] left-[46px] flex size-[24px] items-center justify-center rounded-full bg-[#c42b1c] text-[16px] leading-none">3</span>
      </div>
      <Slot>
        <svg viewBox="0 0 36 36" className="size-[35px]">
          <defs>
            <linearGradient id="win" x1="0" y1="0" x2="1" y2="1">
              <stop offset="0" stopColor="#86dcff" />
              <stop offset="1" stopColor="#0b93f5" />
            </linearGradient>
          </defs>
          <path d="M1.500 0H17v17.300H0V1.500A1.500 1.500 0 0 1 1.500 0zM18.500 0h16A1.500 1.500 0 0 1 36 1.500v15.800H18.500zM0 18.700h17V36H1.500A1.500 1.500 0 0 1 0 34.500zM18.500 18.700H36v15.800a1.500 1.500 0 0 1-1.500 1.500h-16z" fill="url(#win)" />
        </svg>
      </Slot>
      <Slot>
        <svg viewBox="0 0 34 34" className="ml-[2px] size-[34px]" fill="#4c4c4c" stroke="#e8e8e8" strokeWidth="3">
          <path d="M24 24l8 8" strokeWidth="4" strokeLinecap="round" />
          <circle cx="15" cy="15" r="13" />
        </svg>
      </Slot>
      <Slot>
        <svg viewBox="0 0 36 34" className="ml-[2px] h-[34px] w-9">
          <rect x="9" y="0" width="27" height="25" rx="2" fill="#f0f0f0" />
          <rect x="0" y="9" width="27" height="24" rx="2" fill="#666" opacity=".95" />
          <path d="M9 9h18v16H9z" fill="#b4b4b4" />
        </svg>
      </Slot>
      <Slot><Copilot /></Slot>
      <Slot dot>
        <svg viewBox="0 0 36 33" className="h-[33px] w-9">
          <rect y="3.500" width="36" height="29.500" rx="1.500" fill="#ffd04a" />
          <path d="M0 2a2 2 0 0 1 2-2h10l3 3.500-3 3.500H0z" fill="#e09c0c" />
          <path d="M0 20h36v11.500a1.500 1.500 0 0 1-1.500 1.500h-33A1.500 1.500 0 0 1 0 31.500z" fill="#f8bd26" />
          <path d="M6 33v-7a4 4 0 0 1 4-4h16a4 4 0 0 1 4 4v7z" fill="#1173ca" />
          <path d="M11 27.500h14" stroke="#0a4f96" strokeWidth="2" />
        </svg>
      </Slot>
      <Slot dot><Edge /></Slot>
      <Slot>
        <div className="flex size-9 items-center justify-center rounded-[2px] bg-[#0596d5] text-[12px] leading-none tracking-tight">
          my<b className="text-[15px] italic">hp</b>
        </div>
      </Slot>
      <Slot>
        <svg viewBox="0 0 36 36" className="size-9">
          <path d="M0 5.500h36V32a4 4 0 0 1-4 4H4a4 4 0 0 1-4-4z" fill="#f1f1f1" />
          <path d="M9 8V3a1.500 1.500 0 0 1 1.500-1.500h15A1.500 1.500 0 0 1 27 3v5" fill="none" stroke="#2fa9e0" strokeWidth="2" />
          <path d="M10 13h7.500v7.500H10z" fill="#f25022" />
          <path d="M18.500 13H26v7.500h-7.500z" fill="#7fba00" />
          <path d="M10 21.500h7.500V29H10z" fill="#00a4ef" />
          <path d="M18.500 21.500H26V29h-7.500z" fill="#ffb900" />
        </svg>
      </Slot>
      <Slot>
        <div className="flex size-9 items-center justify-center rounded-full border-2 border-white bg-[#0d96d6] text-[33px] leading-none font-extrabold">?</div>
        <i className="absolute top-[9px] right-[7px] size-[24px] rounded-full bg-[#ffc20e]" />
      </Slot>
      <Slot>
        <svg viewBox="0 0 32 36" className="h-9 w-8">
          <path d="M0 0l16 9L32 0v28l-16 8-16-8z" fill="#c52a2e" />
          <path d="M7 12l9 5 9-5v12l-9 5-9-5z" fill="#2a2a2b" />
        </svg>
      </Slot>
      <Slot>
        <div className="relative flex h-[60px] w-[60px] items-center justify-center rounded-[6px] border border-[#4b4b4b] bg-[#353535]">
          <i className="absolute inset-y-0 right-[5px] w-px bg-[#4b4b4b]" />
          <Chrome className="size-9" />
          <span className="absolute top-[4px] right-[2px] flex size-[24px] items-center justify-center rounded-full bg-[#ec407a] text-[14px] leading-none text-[#fbdde8]">V</span>
          <i className="absolute bottom-0 h-[5px] w-[24px] rounded-full bg-[#4cc2ff]" />
        </div>
      </Slot>
      <Slot dot>
        <svg viewBox="0 0 34 36" className="h-9 w-[34px]" fill="none">
          <path d="M15 4A14 14 0 0 0 3 18" stroke="#4da862" strokeWidth="3" />
          <path d="M31 18a14 14 0 0 1-12 14" stroke="#4da862" strokeWidth="3" />
          <path d="M19 4a14 14 0 0 1 12 12M3 20a14 14 0 0 0 11 12" stroke="#16393c" strokeWidth="4" />
          <path d="M15 0v8l-4-3zM17 36v-8l4 3z" fill="#4da862" />
          <path d="M17 9l1.500 7.500L26 18l-7.500 1.500L17 27l-1.500-7.500L8 18l7.500-1.500z" fill="#1a5450" />
          <path d="M11 12l6 4.500 6-4.500-4.500 6 4.500 6-6-4.500-6 4.500 4.500-6z" fill="#4da862" />
        </svg>
      </Slot>
      <Slot dot>
        <svg viewBox="0 0 35 35" className="size-[35px]">
          <circle cx="17.500" cy="17.500" r="13.500" fill="none" stroke="#8fb02c" strokeWidth="7" />
          <path d="M14 13l8 1 6 7-6 5-7-6z" fill="#ee8a32" />
          <path d="M14 13l8 1-6 6z" fill="#f3c64c" />
          <path d="M22 20l12 9v5h-6l-9-10z" fill="#a5c85a" />
        </svg>
      </Slot>
      <Slot dot>
        <svg viewBox="0 0 35 33" className="h-[33px] w-[35px]">
          <path d="M8 2a2 2 0 0 1 2-2h11v10H8z" fill="#21a366" />
          <path d="M21 0h12a2 2 0 0 1 2 2v8H21z" fill="#33c481" />
          <path d="M8 10h13v12H8z" fill="#107c41" />
          <path d="M21 10h14v6H21z" fill="#21a366" />
          <path d="M21 16h14v8H21z" fill="#107c41" />
          <path d="M8 22h13v2h14v7a2 2 0 0 1-2 2H10a2 2 0 0 1-2-2z" fill="#185c37" />
          <rect y="7" width="18" height="18" rx="2" fill="#107c41" />
          <text x="9" y="21" textAnchor="middle" fontSize="14" fontWeight="700" fill="#fff" fontFamily="Noto Sans">X</text>
        </svg>
      </Slot>
      <Slot dot>
        <svg viewBox="0 0 36 36" className="size-9">
          <path d="M2 34l2.500-9A16 16 0 1 1 11 31.500z" fill="none" stroke="#25d366" strokeWidth="3" />
          <path d="M12 10c-3 3-1 8 3 12s9 6 12 3c1-1 1-3 0-3l-4-2-2 2c-3-1-5-3-6-6l2-2-2-4c-1-1-2-1-3 0z" fill="#25d366" />
        </svg>
        <span className="absolute top-[9px] left-[27px] flex h-[24px] w-[39px] items-center justify-center rounded-[9px] bg-[#4cc2ff] text-[16.500px] leading-none text-black">99+</span>
      </Slot>
      <Slot dot>
        <Chrome className="size-9" />
        <span className="absolute top-[9px] right-[9px] flex size-[24px] items-center justify-center rounded-full bg-[#5d4037] text-[14px] leading-none text-[#ddd]">V</span>
      </Slot>
      <div className="-mb-px ml-[2.500px] flex w-[141px] items-stretch border-x-2 border-[#454545] pb-px pl-[2px]">
        <Slot dot>
          <svg viewBox="0 0 36 36" className="size-9" fill="#eeb211">
            <path d="M0 0h14v5H9l7 7v-3h4v3l7-7h-5V0h14v14h-5V9l-6 6h5v4h-5v3h-4v-5h-6v-3l-3 3L5 9v6H0z" />
            <path d="M20 19h5l6 7v-5h5v15H20v-5h6l-6-6z" />
          </svg>
        </Slot>
        <Slot>
          <span className="flex gap-[4.500px]">
            <i className="size-[5px] rounded-full bg-white" />
            <i className="size-[5px] rounded-full bg-white" />
            <i className="size-[5px] rounded-full bg-white" />
          </span>
        </Slot>
      </div>
      <div className="mr-px ml-auto flex items-center">
        <Vee className="h-[10px] w-[17px] rotate-180" />
        <svg viewBox="0 0 26 26" className="ml-[27px] size-[25px]" fill="none" stroke="#fff" strokeWidth="1.500">
          <path d="M2 12A11 11 0 0 1 23 8M23.500 1v8H16M13 24A11 11 0 0 1 3 18M2 25v-8h8" />
          <circle cx="19" cy="19" r="6" fill="#f00" stroke="none" />
        </svg>
        <svg viewBox="0 0 24 18" className="ml-[23px] h-[18px] w-6">
          <path d="M1 10a6 6 0 0 1 5-6 7 7 0 0 1 12 3l-9 9H5a5 5 0 0 1-4-6z" fill="#a8a8a8" />
          <path d="M5 17.500h14a5 5 0 0 0 0-10c-5-.5-8 2-17 7A5 5 0 0 0 5 17.500z" fill="#fff" />
        </svg>
        <svg viewBox="0 0 24 18" className="ml-[23px] h-[18px] w-6" fill="none" stroke="#fff" strokeWidth="1.700">
          <path d="M1 6.500a15.500 15.500 0 0 1 22 0M4.500 10a10.500 10.500 0 0 1 15 0M8 13.500a5.700 5.700 0 0 1 8 0" />
          <circle cx="12" cy="16" r="1.300" fill="#fff" />
        </svg>
        <svg viewBox="0 0 24 20" className="ml-[12px] h-5 w-6" fill="none" stroke="#fff" strokeWidth="1.600">
          <path d="M1 7h4l5-5v16l-5-5H1zM13 7c1.500 1.500 1.500 4.500 0 6M16 4.500c3 3 3 8 0 11M19 2c4.500 4.500 4.500 11.500 0 16" />
        </svg>
        <svg viewBox="0 0 24 20" className="ml-[11px] h-5 w-6" fill="none" stroke="#fff" strokeWidth="1.800">
          <path d="M9 4h10a2 2 0 0 1 2 2v10a2 2 0 0 1-2 2H4a2 2 0 0 1-2-2v-4M21 8.500h2v5h-2" />
          <path d="M5 0L1 7h3v5l5-7H5z" fill="#fff" stroke="none" />
          <path d="M5 11h6v5H5z" fill="#fff" stroke="none" />
        </svg>
        <div className="ml-[25px] w-[84px] text-right text-[17.300px] leading-[24px] whitespace-nowrap">
          <div>6:31 PM</div>
          <div>2/17/2025</div>
        </div>
        <svg viewBox="0 0 20 23" className="mr-[30px] ml-[13px] h-[23px] w-5" fill="#99ebff">
          <path d="M10 0a7.500 7.500 0 0 1 7.500 7.500V13l2.500 5H0l2.500-5V7.500A7.500 7.500 0 0 1 10 0zM6.500 19.500h7a3.500 3.500 0 0 1-7 0z" />
        </svg>
      </div>
    </div>
  );
}

export default function App() {
  return (
    <div className="flex h-[1079px] w-[1919px] flex-col overflow-hidden bg-black font-['Noto_Sans',sans-serif]">
      <ChromeTabs />
      <ChromeToolbar />
      <ConsoleHeader />
      <UbuntuBar />
      <div className="flex min-h-0 flex-1">
        <Dock />
        <div className="flex min-w-0 flex-1 flex-col">
          <FirefoxTabs />
          <FirefoxNav />
          <OpenEmrMenu />
          <PatientBar />
          <FrameTabs />
          <CalendarToolbar />
          <CalendarBody />
        </div>
      </div>
      <Taskbar />
    </div>
  );
}
